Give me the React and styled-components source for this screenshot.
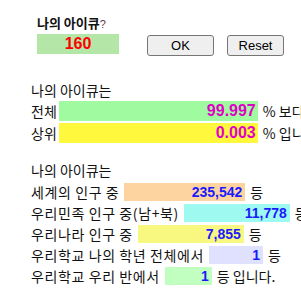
import React from 'react';
import styled, { createGlobalStyle } from 'styled-components';

const GlobalStyle = createGlobalStyle`
  html, body {
    margin: 0;
    padding: 0;
    background: #ffffff;
    overflow: hidden;
  }
  body {
    font-family: "Noto Sans CJK KR", "Liberation Sans", sans-serif;
    font-size: 14px;
    color: #111111;
  }
`;

const Page = styled.div`
  width: 301px;
  height: 301px;
  padding-left: 31px;
  box-sizing: border-box;
  white-space: nowrap;
  overflow: hidden;
`;

const Header = styled.div`
  margin-left: 6px;
  padding-top: 15px;
`;

const Title = styled.div`
  font-size: 13px;
  font-weight: bold;
  line-height: 16px;
`;

const Question = styled.span`
  font-family: "Liberation Sans", sans-serif;
  font-weight: normal;
  font-size: 11px;
  color: #663344;
`;

const HeaderRow = styled.div`
  display: flex;
  align-items: flex-start;
  margin-top: 2px;
`;

const IqBox = styled.div`
  width: 82px;
  height: 20px;
  background: #b4e6a8;
  color: #ff0000;
  font-family: "Liberation Sans", sans-serif;
  font-weight: bold;
  font-size: 16px;
  line-height: 20px;
  text-align: center;
`;

const Button = styled.button`
  margin-top: 1px;
  margin-left: ${p => p.$gap}px;
  width: ${p => p.$w}px;
  height: 21px;
  padding: 0;
  background: #efefef;
  border: 1px solid #767676;
  border-radius: 3px;
  font-family: "Liberation Sans", sans-serif;
  font-size: 13px;
  color: #000000;
`;

const Heading = styled.div`
  margin-top: ${p => p.$top}px;
  line-height: 16px;
`;

const List = styled.div`
  display: flex;
  flex-direction: column;
  gap: ${p => p.$gap}px;
  margin-top: ${p => p.$top}px;
`;

const Row = styled.div`
  display: flex;
  align-items: center;
  gap: ${p => p.$gap}px;
  height: ${p => p.$h}px;
  line-height: 16px;
`;

const Bar = styled.div`
  width: ${p => p.$w}px;
  height: ${p => p.$h}px;
  flex: none;
  box-sizing: border-box;
  padding-right: ${p => p.$pad}px;
  background: ${p => p.$bg};
  color: ${p => p.$fg};
  font-family: "Liberation Sans", sans-serif;
  font-weight: bold;
  font-size: ${p => p.$size}px;
  line-height: ${p => p.$h}px;
  text-align: right;
`;

const Label = styled.span`
  flex: none;
  letter-spacing: ${p => p.$spacing || 0}px;
`;

const Unit = styled.span`
  flex: none;
  margin-left: ${p => p.$left || 0}px;
`;

const percentRows = [
  { label: '전체', value: '99.997', bg: '#a0faa0', tail: '% 보다' },
  { label: '상위', value: '0.003', bg: '#fff83c', tail: '% 입니다.' },
];

const rankRows = [
  { label: '세계의 인구 중', value: '235,542', w: 121, bg: '#fdd4a0', tail: '등' },
  { label: '우리민족 인구 중(남+북)', value: '11,778', w: 106, bg: '#9ef9f0', tail: '등' },
  { label: '우리나라 인구 중', value: '7,855', w: 106, bg: '#f8f880', tail: '등' },
  { label: '우리학교 나의 학년 전체에서', value: '1', w: 54, bg: '#e0e0ff', tail: '등' },
  { label: '우리학교 우리 반에서', value: '1', w: 47, bg: '#c0ffc0', tail: '등 입니다.' },
];

const App = () => (
  <Page>
    <GlobalStyle />
    <Header>
      <Title>
        나의 아이큐<Question>?</Question>
      </Title>
      <HeaderRow>
        <IqBox>160</IqBox>
        <Button $gap={28} $w={67}>OK</Button>
        <Button $gap={13} $w={57}>Reset</Button>
      </HeaderRow>
    </Header>

    <Heading $top={26}>나의 아이큐는</Heading>
    <List $gap={2} $top={3}>
      {percentRows.map(item => (
        <Row key={item.label} $gap={2} $h={20}>
          <Label>{item.label}</Label>
          <Bar $w={199} $h={20} $pad={2} $bg={item.bg} $fg="#e000c8" $size={16}>
            {item.value}
          </Bar>
          <Unit $left={3}>{item.tail}</Unit>
        </Row>
      ))}
    </List>

    <Heading $top={19}>나의 아이큐는</Heading>
    <List $gap={3} $top={5}>
      {rankRows.map(item => (
        <Row key={item.label} $gap={5} $h={18}>
          <Label $spacing={0.6}>{item.label}</Label>
          <Bar $w={item.w} $h={18} $pad={3} $bg={item.bg} $fg="#1a1aff" $size={14}>
            {item.value}
          </Bar>
          <Unit>{item.tail}</Unit>
        </Row>
      ))}
    </List>
  </Page>
);

export default App;
